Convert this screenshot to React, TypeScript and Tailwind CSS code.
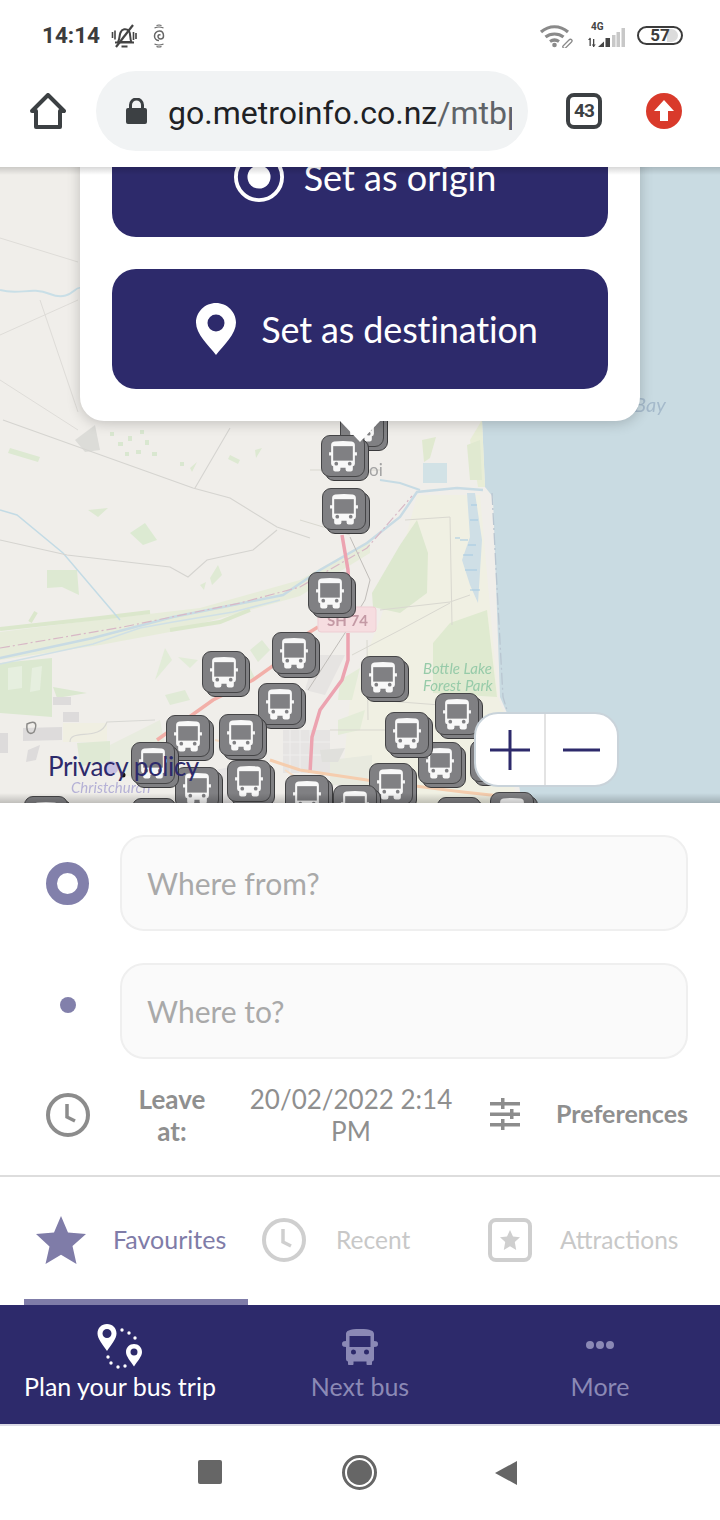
import React from 'react';

// later entries sit on top
const markers = [
  [340, 405], [321, 435], [322, 488], [308, 572], [272, 632], [202, 651], [361, 656], [258, 683],
  [470, 740], [418, 742], [435, 693], [385, 712], [166, 715], [219, 714], [175, 767], [131, 742],
  [227, 760], [369, 763], [285, 775], [333, 785], [24, 796], [132, 798], [437, 797], [490, 792],
];

const BusGlyph = ({ className }: { className?: string }) => (
  <svg viewBox="0 0 27 30" className={className}>
    <path fill="currentColor" d="M5 .5Q13.500-.5 22 .5 25 1 25 4v7h2v3h-2v8q0 2-2 2.500v3q0 2-2 2h-3q-2 0-2-2V26h-5v1.500q0 2-2 2H6q-2 0-2-2v-3q-2-.5-2-2.500v-8H0v-3h2V4q0-3 3-3.500z" />
    <path fill="#808083" d="M4 5h19v14H4z" />
    <circle cx="7" cy="22" r="1.800" fill="#808083" />
    <circle cx="20" cy="22" r="1.800" fill="#808083" />
  </svg>
);

const BusMarker = ({ x, y }: { x: number; y: number }) => (
  <div className="absolute h-[47px] w-[48px]" style={{ left: x, top: y - 167 }}>
    <div className="absolute left-[4px] top-[4px] h-[42px] w-[44px] rounded-[9px] border-[1.5px] border-[#3a3a3c] bg-[#808083]" />
    <div className="absolute left-0 top-0 flex h-[42px] w-[44px] items-center justify-center rounded-[9px] border-[1.5px] border-[#454547] bg-[#808083]">
      <BusGlyph className="h-[31px] w-[28px] text-[#f8f8f8]" />
    </div>
  </div>
);

const MapBase = () => (
  <svg viewBox="0 167 720 636" className="absolute inset-0 h-[636px] w-[720px] blur-[0.6px]">
    <rect x="0" y="167" width="720" height="636" fill="#f0eeea" />
    <path d="M560 167 L482 420 L485 487 L493 497 L500 697 L507 713 L522 803 L720 803 L720 167Z" fill="#c9dbe2" />

    {/* sand and forest by the coast */}
    <path d="M417 495 L480 495 L498 697 L507 720 L516 803 L340 803 L350 700 L372 640 L380 620 L400 560Z" fill="#f0f0e3" />
    <path d="M482 420 L485 487 L478 487 L470 440Z" fill="#e8edd6" />
    <path d="M372 593 L400 545 L417 520 L428 553 L427 593 L400 613 L373 607Z" fill="#dde8cf" />
    <path d="M433 643 L450 623 L487 610 L497 697 L433 693Z" fill="#dfead0" />
    <path d="M423 463 L447 463 L447 483 L423 483Z" fill="#d2e2e6" />
    <path d="M467 493 L475 493 L482 540 L478 603 L470 585 L462 560 L470 537Z" fill="#cfdfe6" />
    <path d="M460 540 h8 M468 545 h8 M463 555 h10 M465 570 h12 M470 590 h10 M470 520 h8 M471 505 h6 M455 538 h5" stroke="#a3c9e2" strokeWidth="1" fill="none" />
    <path d="M422 440 L436 437 L430 458 L424 462Z M467 445 L480 440 L482 480 L470 480Z" fill="#e0e9d0" />
    <path d="M340 680 L360 668 L352 700 L338 700Z M338 720 L365 710 L360 730 L338 735Z" fill="#e4ecd8" />

    {/* paddocks */}
    <path d="M130 533 L145 523 L157 540 L143 545Z" fill="#dcead2" />
    <path d="M47 570 L77 570 L79 595 L62 587 L47 588Z" fill="#dde9d2" />
    <path d="M88 510 L108 508 L98 517Z M10 448 L40 457 L38 462 L8 453Z M255 450 L262 448 L256 458Z M190 468 L197 462 L192 472Z M230 455 L240 460 L238 464 L228 459Z" fill="#dde9d2" />
    <path d="M110 432 h4v4h-4z M118 442 h5v4h-5z M128 436 h4v5h-4z M136 450 h5v4h-5z M145 440 h4v5h-4z M152 452 h5v4h-5z M125 452 h4v4h-4z M140 430 h4v4h-4z M180 462 h4v4h-4z" fill="#d9e7d0" />
    <path d="M75 440 L95 425 L100 450 L85 452Z" fill="#dcdcd8" />
    <path d="M210 578 L218 565 L222 575 L212 585Z M200 585 L206 582 L204 590Z" fill="#dfead4" />

    {/* river flats */}
    <path d="M0 632 L80 622 L200 608 L250 594 L300 580 L370 540 L370 553 L300 596 L250 610 L170 632 L100 645 L0 660Z" fill="#e7ecda" />
    <path d="M0 629 L45 624 L100 618 L150 612 M170 630 L220 622 L250 610 M30 622 L36 612" stroke="#dbe7cc" strokeWidth="4" fill="none" />
    <path d="M155 680 L165 648 L172 660 Z M178 657 L198 660 L190 668Z" fill="#e2ecd8" />

    {/* green block to the west */}
    <path d="M0 663 L52 658 L52 717 L0 713Z" fill="#dbe8d0" />
    <path d="M8 668 L22 666 L22 688 L8 690Z M32 668 L42 666 L40 690 L30 692Z" fill="#e6efdf" />
    <path d="M53 687 L87 693 L57 698Z" fill="#dbe8d0" />
    <path d="M250 650 L262 640 L270 650 L258 662Z M238 678 L250 668 L256 680Z M165 695 L185 690 L190 700 L170 705Z" fill="#e0ead6" />

    {/* buildings and town */}
    <path d="M53 697 h18 v8 h-18z M63 712 h16 v10 h-16z M23 728 L62 727 L62 740 L23 741Z M0 733 h8 v20 h-8z M28 750 L40 745 L36 760 L26 762Z" fill="#dddbdb" />
    <path d="M63 723 H107 V742 H63Z" fill="#f0efe2" />
    <path d="M77 743 L110 741 L110 763 L80 766Z" fill="#dfe9d4" />
    <path d="M110 745 L160 720 L165 745 L140 780 L110 770Z" fill="#e8ecdf" />
    <path d="M283 730 H330 V773 H283Z" fill="#e6e4e3" />
    <path d="M290 730 V773 M300 730 V773 M310 730 V773 M283 742 H330 M283 755 H330" stroke="#efeeed" strokeWidth="1" />
    <path d="M315 655 L345 655 L325 695 L305 690Z" fill="#e6e4e2" />
    <path d="M190 775 L265 760 L275 803 L190 803Z" fill="#e6e4e4" />
    <path d="M330 760 L372 755 L372 785 L330 785Z" fill="#e8eadf" />
    <path d="M320 750 L345 748 L338 762 L322 762Z" fill="#e0e0dc" />
    <path d="M27 724 C35 720 38 723 34 732 30 735 26 733 27 724Z" fill="none" stroke="#8b8a88" strokeWidth="1.500" />

    {/* rivers */}
    <path d="M0 290 C20 296 30 286 50 294 S75 286 80 288" stroke="#c9dfe7" strokeWidth="2" fill="none" />
    <path d="M0 510 L17 515 L63 553 L120 620" stroke="#c3dbe5" strokeWidth="1.500" fill="none" />
    <path d="M0 658 L93 638 L173 617 L233 605 L283 595 L320 570 L367 543 L400 517 L417 492 L457 488 L483 490" stroke="#c8dbe4" strokeWidth="2.500" fill="none" />
    <path d="M0 664 L93 644 L140 628 L173 622 L233 612 L280 600" stroke="#d0e0e6" strokeWidth="1.500" fill="none" />
    <path d="M380 480 L400 483 L420 490" stroke="#c6dbe4" strokeWidth="2" fill="none" />

    {/* boundaries and roads */}
    <path d="M0 648 L123 627 L240 603 L300 587 L367 548 L412 496" stroke="#d8b8c6" strokeWidth="1.200" strokeDasharray="10 3 2 3" fill="none" />
    <path d="M492 493 L497 587 L503 697 L510 720" stroke="#b9c6d1" strokeWidth="1.300" strokeDasharray="12 3 2 3" fill="none" />
    <path d="M3 420 L193 488 L230 498 L277 527 L310 538 M230 428 L195 488 M277 530 L253 550 L207 560 L188 577 L170 567 L67 555 L0 540" stroke="#d5d4d0" strokeWidth="1.100" fill="none" />
    <path d="M0 238 L78 262 M0 335 L78 300 M0 380 L78 430 M40 300 L78 412" stroke="#dedcd8" strokeWidth="1" fill="none" />
    <path d="M405 520 L450 517 L452 625 M380 610 L450 602 L470 595 M352 655 L400 630 L450 603 M367 640 L368 720 M375 700 L440 705 M330 730 H420 M350 535 L300 520 M310 470 L380 470" stroke="#d9d8d0" strokeWidth="1" fill="none" />
    <path d="M350 537 L370 580 L365 600 L345 633 L308 690" stroke="#c0bdb9" strokeWidth="1" fill="none" />
    <path d="M70 742 C70 728 100 742 107 722 L155 720" stroke="#d8d8d4" strokeWidth="1.200" fill="none" />
    <path d="M157 740 L213 700 L253 680 L277 663 L300 638 L318 627" stroke="#f2afa8" strokeWidth="3.500" fill="none" />
    <path d="M342 535 L348 570 L350 610 M348 633 L348 660 L342 680 L320 710 L312 737 L310 773" stroke="#eca3b0" strokeWidth="3.500" fill="none" />
    <path d="M270 760 L300 770 L367 780 L463 792 L500 796" stroke="#f5cdae" strokeWidth="3" fill="none" />
    <path d="M215 740 L265 752 M285 770 L330 800" stroke="#f6dcc4" strokeWidth="2" fill="none" />

    {/* labels */}
    <rect x="318" y="607" width="58" height="25" rx="3" fill="#f6dde0" stroke="#eecdd3" />
    <text x="327" y="626" fontSize="15" fontWeight="700" fill="#c49aa5" fontFamily="Lato, sans-serif">SH 74</text>
    <text x="423" y="674" fontSize="15" fill="#97cba9" fontStyle="italic" fontFamily="Lato, sans-serif">Bottle Lake</text>
    <text x="423" y="691" fontSize="15" fill="#97cba9" fontStyle="italic" fontFamily="Lato, sans-serif">Forest Park</text>
    <text x="71" y="793" fontSize="15" fill="#b5b1d6" fontStyle="italic" fontFamily="Lato, sans-serif">Christchurch</text>
    <text x="634" y="412" fontSize="20" fill="#a5bacb" fontStyle="italic" fontFamily="Lato, sans-serif">Bay</text>
    <text x="369" y="476" fontSize="17" fill="#a3a3a3" fontFamily="Lato, sans-serif">oi</text>
    <circle cx="111" cy="768" r="7" fill="#c6bfe0" />
    <circle cx="123" cy="775" r="2.500" fill="#111" />
  </svg>
);

const PinIcon = ({ className }: { className?: string }) => (
  <svg viewBox="0 0 40 52" className={className}>
    <path fill="#fff" fillRule="evenodd" d="M20 0C9 0 0 8.800 0 19.600 0 31 12 42 20 52c8-10 20-21 20-32.400C40 8.800 31 0 20 0zm0 11.500a8.500 8.500 0 1 1 0 17 8.500 8.500 0 0 1 0-17z" />
  </svg>
);

const Clock = ({ color, className }: { color: string; className?: string }) => (
  <svg viewBox="0 0 44 44" className={className} fill="none" stroke={color}>
    <circle cx="22" cy="22" r="20" strokeWidth="4" />
    <path d="M21 11v13l8 4" strokeWidth="3.500" />
  </svg>
);

const StatusBar = () => (
  <div className="flex h-[70px] items-center justify-between pl-[42px] pr-[37px] pt-[1px] font-['Roboto',sans-serif]">
    <div className="flex items-center">
      <span className="text-[22.5px] font-bold text-[#3c3c3c]">14:14</span>
      <svg viewBox="0 0 26 24" className="ml-[11px] h-[24px] w-[26px]" fill="none" stroke="#444" strokeWidth="2">
        <path d="M7 18c2-3 1-6 2.500-9.500S15 4 18 7c2 3 .5 8 2.500 11zM4 18.500h19M10.500 22.500h6" />
        <path d="M22 1 5 23" strokeWidth="2.200" />
        <path d="M1.500 8v6M4 6.500v9M22.500 8v8M25 9v6" strokeWidth="1.600" />
      </svg>
      <svg viewBox="0 0 12 24" className="ml-[16px] h-[24px] w-[12px]" fill="none" stroke="#666" strokeWidth="1.200">
        <path d="M3.500 1.500q2.500-1 5 0M1.500 4q4.500-2 9 0M1.500 20q4.500 2 9 0M3.500 22.500q2.500 1 5 0" />
        <path d="M6 16.500c-2.500 0-4.500-2-4.500-4.500S3.500 7 6.500 7 10.500 9.500 10.500 12 9 15 7.500 15 5 13.500 5 12.300 6 10.500 7.500 11" strokeWidth="1.500" />
      </svg>
    </div>
    <div className="flex items-center">
      <svg viewBox="0 0 34 24" className="h-[24px] w-[34px]" fill="none" stroke="#8a8a8a" strokeWidth="3.200">
        <path d="M2 8c8-7 19-7 27 0M6.500 13c5-4 13-4 18 0M11 17.500c3-2 6-2 9 0" />
        <circle cx="15.500" cy="21" r="2.300" fill="#8a8a8a" stroke="none" />
        <path d="m24 22 6-6c2-2 4 .5 2.500 2l-6 6c-1 1-3.500-.5-2.500-2z" strokeWidth="1.300" />
      </svg>
      <div className="relative ml-[15px] h-[24px] w-[38px]">
        <span className="absolute left-[3px] top-[-3px] text-[10px] font-bold leading-[12px] text-[#444]">4G</span>
        <svg viewBox="0 0 38 24" className="h-[24px] w-[38px]">
          <path d="M1.500 14h1.300v8H1.500zM0 16l2-2.500L3 16zM5 15h1.300v8H5zM3.800 20.500h4L5.600 23z" fill="#444" />
          <path d="M10 23h6v-5.500zM17.500 23H22v-9h-4.500z" fill="#444" />
          <path d="M24 23h3.500V11H24zM28.500 23H32V8h-3.500zM33.500 23H37V4h-3.500z" fill="#c8c8c8" />
        </svg>
      </div>
      <div className="relative ml-[11px] flex h-[19px] w-[46px] items-center justify-center overflow-hidden rounded-full border-2 border-[#3c3c3c]">
        <div className="absolute inset-y-[1px] right-[3px] w-[11px] rounded-r-full bg-[#dcdcdc]" />
        <span className="relative text-[17px] font-bold leading-none text-[#3c3c3c]">57</span>
      </div>
    </div>
  </div>
);

const BrowserBar = () => (
  <div className="flex h-[97px] items-start pl-[30px] pt-[1px] font-['Roboto',sans-serif]">
    <svg viewBox="0 0 36 36" className="mt-[22px] h-[36px] w-[36px]" fill="none" stroke="#3c4043" strokeWidth="4" strokeLinejoin="round">
      <path d="M6 34V18H2L18 2l16 16h-4v16z" />
    </svg>
    <div className="ml-[30px] flex h-[80px] w-[432px] items-center rounded-full bg-[#f1f3f4] pl-[30px] pr-[16px] pt-[3px]">
      <svg viewBox="0 0 21 26" className="mb-[3px] h-[26px] w-[21px] shrink-0">
        <path fill="#3c4043" d="M3 10V7a7.500 7.500 0 0 1 15 0v3h1a2 2 0 0 1 2 2v12a2 2 0 0 1-2 2H2a2 2 0 0 1-2-2V12a2 2 0 0 1 2-2zm3 0h9V7a4.500 4.500 0 0 0-9 0z" />
      </svg>
      <div className="ml-[21px] overflow-hidden whitespace-nowrap text-[32px] leading-[40px] text-[#202124]">
        go.metroinfo.co.nz<span className="text-[#5f6368]">/mtbp</span>
      </div>
    </div>
    <div className="ml-[38px] mt-[22px] flex h-[36px] w-[36px] items-center justify-center rounded-[8px] border-[4px] border-[#3c4043] text-[19px] font-bold tracking-[-1px] text-[#3c4043]">43</div>
    <svg viewBox="0 0 36 36" className="ml-[44px] mt-[22px] h-[36px] w-[36px]">
      <circle cx="18" cy="18" r="18" fill="#d93a2b" />
      <path fill="#fff" d="M18 7 8 18h6v10h8V18h6z" />
    </svg>
  </div>
);

const MapSection = () => (
  <div className="relative h-[636px] overflow-hidden bg-[#f0eeea]">
    <MapBase />
    {markers.map(([x, y]) => <BusMarker key={`${x}-${y}`} x={x} y={y} />)}
    {/* popup */}
    <div className="absolute left-[80px] top-[-82px] flex w-[560px] flex-col gap-[32px] rounded-[24px] bg-white p-[32px] shadow-[0_2px_14px_rgba(0,0,0,0.2)]">
      <button className="flex h-[120px] items-center justify-center gap-[20px] rounded-[24px] bg-[#2d2a6b] pl-[10px] text-[36px] text-white">
        <svg viewBox="0 0 52 52" className="h-[50px] w-[50px]">
          <circle cx="26" cy="26" r="24" fill="none" stroke="#fff" strokeWidth="4" />
          <circle cx="26" cy="26" r="12" fill="#fff" />
        </svg>
        Set as origin
      </button>
      <button className="flex h-[120px] items-center justify-center gap-[25px] rounded-[24px] bg-[#2d2a6b] pl-[14px] text-[36px] tracking-[-0.15px] text-white">
        <PinIcon className="h-[52px] w-[40px]" />
        Set as destination
      </button>
      <div className="absolute left-[260px] top-full h-0 w-0 border-x-[20px] border-t-[21px] border-x-transparent border-t-white" />
    </div>
    <span className="absolute left-[48px] top-[583px] text-[26px] leading-[32px] tracking-[-0.4px] text-[#2d2a6b]">Privacy policy</span>
    {/* zoom control */}
    <div className="absolute left-[474px] top-[545px] flex h-[75px] w-[145px] rounded-[24px] border-2 border-[#c9d3da] bg-white">
      <div className="flex w-[70px] items-center justify-center border-r-2 border-[#e3e3e3]">
        <svg viewBox="0 0 40 40" className="h-[40px] w-[40px]"><path d="M20 0v40M0 20h40" stroke="#2d2a6b" strokeWidth="3" /></svg>
      </div>
      <div className="flex flex-1 items-center justify-center">
        <svg viewBox="0 0 38 4" className="h-[4px] w-[37px]"><path d="M0 2h38" stroke="#2d2a6b" strokeWidth="3" /></svg>
      </div>
    </div>
    <div className="absolute inset-x-0 bottom-0 h-[10px] bg-gradient-to-b from-transparent to-black/20" />
    <div className="absolute inset-x-0 top-0 h-[8px] bg-gradient-to-b from-black/15 to-transparent" />
  </div>
);

const SearchPanel = () => (
  <div className="flex h-[502px] flex-col bg-white">
    <div className="flex h-[128px] items-center pl-[46px] pr-[32px] pt-[32px]">
      <div className="flex h-[43px] w-[43px] items-center justify-center rounded-full border-[11px] border-[#8280ab] bg-white" />
      <div className="ml-[31px] flex h-[96px] flex-1 items-center rounded-[24px] border-2 border-[#efefef] bg-[#fafafa] pl-[25px] text-[30px] text-[#a9a9a9]">Where from?</div>
    </div>
    <div className="flex h-[128px] items-start pl-[46px] pr-[32px] pt-[32px]">
      <div className="mt-[34px] flex w-[44px] justify-center">
        <div className="h-[16px] w-[16px] rounded-full bg-[#8280ab]" />
      </div>
      <div className="ml-[30px] flex h-[96px] flex-1 items-center rounded-[24px] border-2 border-[#efefef] bg-[#fafafa] pl-[25px] text-[30px] text-[#a9a9a9]">Where to?</div>
    </div>
    <div className="flex h-[118px] items-center border-b-2 border-[#dddddd] pb-[4px] pl-[46px] pr-[32px] text-[26px] leading-[32px] text-[#8f8f8f]">
      <Clock color="#8c8c8c" className="h-[44px] w-[44px] shrink-0" />
      <div className="ml-[46px] w-[72px] text-center font-bold">Leave at:</div>
      <div className="ml-[38px] w-[210px] text-center">20/02/2022 2:14 PM</div>
      <svg viewBox="0 0 30 32" className="mb-[2px] ml-[34px] h-[32px] w-[30px] shrink-0" fill="#8c8c8c">
        <path d="M0 4h30v3.500H0zM0 14.500h30V18H0zM0 25h30v3.500H0z" />
        <path d="M11 0h3.500v11H11zM20 11h3.500v10H20zM11 21h3.500v11H11z" />
      </svg>
      <div className="mb-[4px] ml-auto text-[25px] font-bold">Preferences</div>
    </div>
    <div className="flex flex-1 items-start pt-[38px] text-[24.500px]">
      <div className="relative flex h-[90px] w-[248px] items-start pl-[36px]">
        <svg viewBox="0 0 50 50" className="h-[50px] w-[50px] shrink-0">
          <path fill="#7f7ca8" d="m25 1 7 16.500 18 1.500-13.500 12L40.500 49 25 39.800 9.500 49l4-17.500L0 19l18-1.500z" />
        </svg>
        <span className="ml-[27px] mt-[6px] text-[25px] text-[#7f7ca8]">Favourites</span>
        <div className="absolute bottom-0 left-[24px] right-0 h-[6px] bg-[#7f7ca8]" />
      </div>
      <div className="flex w-[240px] items-start pl-[14px]">
        <Clock color="#cfcfcf" className="mt-[3px] h-[44px] w-[44px] shrink-0" />
        <span className="ml-[30px] mt-[7px] text-[#c8c8c8]">Recent</span>
      </div>
      <div className="flex flex-1 items-start">
        <div className="mt-[3px] flex h-[44px] w-[44px] items-center justify-center rounded-[8px] border-[4px] border-[#cfcfcf]">
          <svg viewBox="0 0 20 20" className="h-[20px] w-[20px]"><path fill="#cfcfcf" d="m10 0 3 6.500 7 .8-5.200 4.700L16.200 20 10 16.300 3.800 20l1.400-8L0 7.300l7-.8z" /></svg>
        </div>
        <span className="ml-[28px] mt-[7px] text-[#c8c8c8]">Attractions</span>
      </div>
    </div>
  </div>
);

const BottomNav = () => (
  <div className="flex h-[121px] border-b-2 border-[#dcdbe6] bg-[#2d2a6b] text-[25px] leading-[32px]">
    <div className="flex w-[240px] flex-col items-center pt-[19px] text-white">
      <svg viewBox="0 0 46 46" className="h-[46px] w-[46px]">
        <path fill="#fff" fillRule="evenodd" d="M10 0C4.500 0 .5 4 .5 9.500.5 15 6 21 10 27c4-6 9.500-12 9.500-17.500C19.500 4 15.500 0 10 0zm0 5a4.500 4.500 0 1 1 0 9 4.500 4.500 0 0 1 0-9z" />
        <path fill="#fff" fillRule="evenodd" d="M37 20c-4.500 0-8 3.500-8 8 0 4.500 4.500 9 8 14.500 3.500-5.500 8-10 8-14.500 0-4.500-3.500-8-8-8zm0 4.500a3.500 3.500 0 1 1 0 7 3.500 3.500 0 0 1 0-7z" />
        <g fill="#fff">
          <circle cx="25" cy="6" r="1.700" /><circle cx="32" cy="9" r="1.700" /><circle cx="38" cy="14" r="1.700" />
          <circle cx="11" cy="33" r="1.700" /><circle cx="14" cy="39" r="1.700" /><circle cx="21" cy="43" r="1.700" /><circle cx="28" cy="42" r="1.700" />
        </g>
      </svg>
      <span className="mt-[0px] whitespace-nowrap">Plan your bus trip</span>
    </div>
    <div className="flex w-[240px] flex-col items-center pt-[19px] text-[#8b89b5]">
      <div className="flex h-[46px] items-center">
        <svg viewBox="0 0 36 36" className="h-[36px] w-[36px]">
          <path fill="#8b89b5" fillRule="evenodd" d="M4 5c0-3 3-5 14-5s14 2 14 5v7l2 .2c1 .1 2 1 2 2.800s-1 2.700-2 2.800l-2 .2v12c0 1.500-1 2.500-2 2.500V35c0 .6-.5 1-1 1h-3.500c-.6 0-1-.4-1-1v-2.500H11.500V35c0 .6-.4 1-1 1H7c-.5 0-1-.4-1-1v-2.500c-1 0-2-1-2-2.500V18l-2-.2c-1-.1-2-1-2-2.800s1-2.700 2-2.800l2-.2zm3.500 2v11h21V7zM9 23a2.500 2.500 0 1 0 5 0 2.500 2.500 0 0 0-5 0zm13 0a2.500 2.500 0 1 0 5 0 2.500 2.500 0 0 0-5 0z" />
        </svg>
      </div>
      <span className="mt-[0px]">Next bus</span>
    </div>
    <div className="flex w-[240px] flex-col items-center pt-[19px] text-[#8b89b5]">
      <div className="flex h-[46px] items-center gap-[2px] pb-[4px]">
        <div className="h-[8px] w-[8px] rounded-full bg-[#8b89b5]" />
        <div className="h-[8px] w-[8px] rounded-full bg-[#8b89b5]" />
        <div className="h-[8px] w-[8px] rounded-full bg-[#8b89b5]" />
      </div>
      <span className="mt-[0px]">More</span>
    </div>
  </div>
);

const SystemNav = () => (
  <div className="flex h-[94px] items-start bg-white pl-[198px] pt-[29px]">
    <div className="mt-[5px] h-[24px] w-[24px] rounded-[2px] bg-[#666666]" />
    <div className="ml-[120px] flex h-[35px] w-[35px] items-center justify-center rounded-full border-[3px] border-[#666666]">
      <div className="h-[25px] w-[25px] rounded-full bg-[#666666]" />
    </div>
    <svg viewBox="0 0 24 26" className="ml-[117px] mt-[5px] h-[26px] w-[24px]"><path fill="#666" d="M23 1v24L1 13z" /></svg>
  </div>
);

export default function App() {
  return (
    <div className="flex h-[1520px] w-[720px] flex-col overflow-hidden bg-white font-['Lato',sans-serif]">
      <div className="relative z-10 bg-white">
        <StatusBar />
        <BrowserBar />
      </div>
      <MapSection />
      <SearchPanel />
      <BottomNav />
      <SystemNav />
    </div>
  );
}
